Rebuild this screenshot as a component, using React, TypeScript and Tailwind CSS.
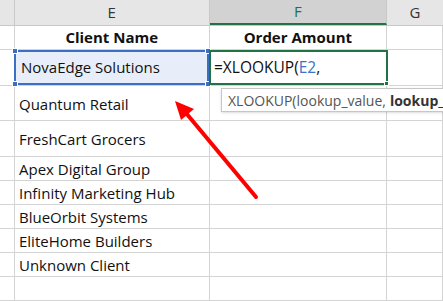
const font = { fontFamily: '"Open Sans", "Noto Sans", sans-serif' };

const rows = [
  { h: 'h-[35px]', text: 'Quantum Retail' },
  { h: 'h-[36px]', text: 'FreshCart Grocers' },
  { h: 'h-[24px]', text: 'Apex Digital Group' },
  { h: 'h-[24px]', text: 'Infinity Marketing Hub' },
  { h: 'h-[24px]', text: 'BlueOrbit Systems' },
  { h: 'h-[24px]', text: 'EliteHome Builders' },
  { h: 'h-[24px]', text: 'Unknown Client' },
  { h: 'h-[24px]', text: '' },
];

function Handle({ className }: { className: string }) {
  return <div className={`absolute w-[6px] h-[6px] bg-[#3a6fc4] border border-white ${className}`} />;
}

export default function App() {
  return (
    <div className="relative w-[443px] h-[301px] bg-white overflow-hidden text-[#111]" style={font}>
      {/* column headers */}
      <div className="flex h-[26px] bg-[#e6e6e6] border-b border-[#c8c8c8] text-[15px] text-[#333]">
        <div className="w-[15px] border-r border-[#c8c8c8]" />
        <div className="w-[195px] border-r border-[#c8c8c8] flex items-center justify-center">E</div>
        <div className="w-[178px] bg-[#d2d2d2] border-r border-[#c8c8c8] border-b-2 border-b-[#217346] flex items-center justify-center text-[#217346]">F</div>
        <div className="w-[56px] flex items-center justify-center">G</div>
      </div>

      {/* header row */}
      <div className="flex h-[24px] border-b border-[#d4d4d4] text-[15px] font-bold">
        <div className="w-[15px] border-r border-[#d4d4d4]" />
        <div className="w-[195px] border-r border-[#d4d4d4] flex items-end justify-center pb-[1px]">Client Name</div>
        <div className="w-[178px] border-r border-[#d4d4d4] flex items-end justify-center pb-[1px]">Order Amount</div>
        <div className="w-[56px] border-r border-[#d4d4d4]" />
      </div>

      {/* active row */}
      <div className="flex h-[36px] border-b border-[#d4d4d4] text-[15px]">
        <div className="w-[15px] border-r border-[#d4d4d4]" />
        <div className="relative w-[195px] bg-[#e8eef9] border-2 border-[#3a6fc4] -ml-px flex items-center pl-[5px]">
          NovaEdge Solutions
          <Handle className="-left-[4px] -top-[4px]" />
          <Handle className="-right-[4px] -top-[4px]" />
          <Handle className="-left-[4px] -bottom-[4px]" />
          <Handle className="-right-[4px] -bottom-[4px]" />
        </div>
        <div className="relative w-[179px] border-2 border-[#217346] flex items-center pl-[3px] text-[15.5px]">
          <span>=XLOOKUP(</span>
          <span className="text-[#3e71c9]">E2</span>
          <span>,</span>
          <div className="absolute -right-[3px] -bottom-[3px] w-[5px] h-[5px] bg-[#217346] border border-white" />
        </div>
        <div className="w-[55px] border-r border-[#d4d4d4]" />
      </div>

      {rows.map((r, i) => (
        <div key={i} className={`flex ${r.h} border-b border-[#d4d4d4] text-[15px]`}>
          <div className="w-[15px] border-r border-[#d4d4d4]" />
          <div className="w-[195px] border-r border-[#d4d4d4] flex items-center pl-[4px] pt-[2px]">{r.text}</div>
          <div className="w-[178px] border-r border-[#d4d4d4]" />
          <div className="w-[56px] border-r border-[#d4d4d4]" />
        </div>
      ))}

      {/* function tooltip */}
      <div className="absolute left-[221px] top-[88px] h-[24px] w-[240px] bg-white border border-[#c6c6c6] shadow-sm flex items-center pl-[6px] text-[14px] text-[#555] whitespace-nowrap">
        XLOOKUP(lookup_value, <span className="font-bold text-[#333] ml-[4px]">lookup_array</span>
      </div>

      {/* red arrow */}
      <svg className="absolute left-0 top-0" width="443" height="301">
        <line x1="256" y1="197" x2="186" y2="113" stroke="#ff0000" strokeWidth="4" strokeLinecap="round" />
        <polygon points="175,101 194,109 181,120" fill="#ff0000" />
      </svg>
    </div>
  );
}
